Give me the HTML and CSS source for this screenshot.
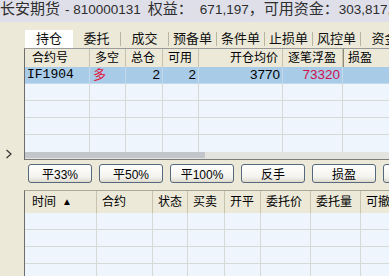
FILE: index.html
```html
<!DOCTYPE html>
<html lang="zh-CN">
<head>
  <meta charset="UTF-8">
  <meta name="viewport" content="width=device-width, initial-scale=1.0">
  <title>长安期货 - 持仓</title>
  <link rel="stylesheet" href="styles.css">
</head>
<body>
  <div class="titlebar">
    <span>长安期货</span><span class="digits dash">- 810000131</span><span class="label">权益：</span><span class="digits value">671,197</span>，<span>可用资金：</span><span class="digits">303,817,</span>
  </div>

  <div class="main">
    <div class="side">
      <svg class="expander" width="8" height="10" viewBox="0 0 8 10">
        <polyline points="1.5,1 6,5 1.5,9" fill="none" stroke="#333" stroke-width="1.2"/>
      </svg>
    </div>

    <div class="content">
      <div class="tabs">
        <div class="tab active">持仓</div>
        <div class="tab">委托</div>
        <div class="tab">成交</div>
        <div class="tab">预备单</div>
        <div class="tab">条件单</div>
        <div class="tab">止损单</div>
        <div class="tab">风控单</div>
        <div class="tab">资金</div>
      </div>

      <!-- positions grid -->
      <div class="panel positions">
        <div class="row head">
          <div class="cell first">合约号</div>
          <div class="cell">多空</div>
          <div class="cell">总仓</div>
          <div class="cell">可用</div>
          <div class="cell right">开仓均价</div>
          <div class="cell">逐笔浮盈</div>
          <div class="cell strong-sep">损盈</div>
        </div>
        <div class="row selected">
          <div class="cell code">IF1904</div>
          <div class="cell long">多</div>
          <div class="cell num">2</div>
          <div class="cell num">2</div>
          <div class="cell num">3770</div>
          <div class="cell num profit">73320</div>
          <div class="cell"></div>
        </div>
        <div class="row"><div class="cell"></div><div class="cell"></div><div class="cell"></div><div class="cell"></div><div class="cell"></div><div class="cell"></div><div class="cell"></div></div>
        <div class="row"><div class="cell"></div><div class="cell"></div><div class="cell"></div><div class="cell"></div><div class="cell"></div><div class="cell"></div><div class="cell"></div></div>
        <div class="row"><div class="cell"></div><div class="cell"></div><div class="cell"></div><div class="cell"></div><div class="cell"></div><div class="cell"></div><div class="cell"></div></div>
        <div class="row last"><div class="cell"></div><div class="cell"></div><div class="cell"></div><div class="cell"></div><div class="cell"></div><div class="cell"></div><div class="cell"></div></div>
        <div class="hscroll"><div class="thumb"></div></div>
      </div>

      <div class="actions">
        <button class="btn">平33%</button>
        <button class="btn">平50%</button>
        <button class="btn">平100%</button>
        <button class="btn">反手</button>
        <button class="btn">损盈</button>
        <button class="btn"></button>
      </div>

      <!-- orders grid -->
      <div class="panel orders">
        <div class="row head">
          <div class="cell first">时间<span class="sort">▲</span></div>
          <div class="cell">合约</div>
          <div class="cell">状态</div>
          <div class="cell">买卖</div>
          <div class="cell">开平</div>
          <div class="cell">委托价</div>
          <div class="cell">委托量</div>
          <div class="cell">可撤</div>
        </div>
        <div class="row"><div class="cell"></div><div class="cell"></div><div class="cell"></div><div class="cell"></div><div class="cell"></div><div class="cell"></div><div class="cell"></div><div class="cell"></div></div>
        <div class="row"><div class="cell"></div><div class="cell"></div><div class="cell"></div><div class="cell"></div><div class="cell"></div><div class="cell"></div><div class="cell"></div><div class="cell"></div></div>
        <div class="row"><div class="cell"></div><div class="cell"></div><div class="cell"></div><div class="cell"></div><div class="cell"></div><div class="cell"></div><div class="cell"></div><div class="cell"></div></div>
        <div class="row"><div class="cell"></div><div class="cell"></div><div class="cell"></div><div class="cell"></div><div class="cell"></div><div class="cell"></div><div class="cell"></div><div class="cell"></div></div>
      </div>
    </div>
  </div>
</body>
</html>
```

FILE: styles.css
```css
body {
  margin: 0;
  width: 389px;
  height: 276px;
  overflow: hidden;
  background: #ece9d8;
  color: #000;
  font-family: "Liberation Sans", "Noto Sans CJK SC", sans-serif;
  font-size: 12px;
}

.titlebar {
  height: 22px;
  background: #dedfe9;
  color: #2e2e2e;
  font-size: 15px;
  line-height: 17px;
  white-space: nowrap;
  overflow: hidden;
}

.titlebar .digits {
  font-size: 13.5px;
}

.titlebar .dash {
  margin-left: 5px;
}

.titlebar .label {
  margin-left: 7px;
}

.titlebar .value {
  margin-left: 7px;
}

.main {
  display: flex;
  height: 254px;
}

.side {
  width: 24px;
  flex: none;
  padding-top: 127px;
  box-sizing: border-box;
}

.expander {
  display: block;
  margin-left: 5px;
}

.content {
  flex: 1;
  min-width: 0;
  padding-top: 8px;
  overflow: hidden;
}

/* tabs */
.tabs {
  display: flex;
  align-items: flex-start;
  height: 18px;
  padding-left: 1px;
  white-space: nowrap;
}

.tab {
  width: 48px;
  flex: none;
  box-sizing: border-box;
  height: 14px;
  margin-top: 2px;
  line-height: 14px;
  text-align: center;
  font-size: 13px;
  color: #111;
  border-right: 1px solid #b9b5a3;
}

.tab.active {
  height: 18px;
  margin-top: 0;
  line-height: 18px;
  background: #fff;
  border-right: none;
}

/* grids */
.panel {
  border-left: 1px solid #6e6e6e;
  border-top: 1px solid #9a9a9a;
  overflow: hidden;
  white-space: nowrap;
}

.row {
  display: grid;
  height: 17px;
  background: #eff5fd;
}

.positions .row {
  grid-template-columns: 65px 36px 37px 36px 84px 60px 80px;
}

.orders .row {
  grid-template-columns: 72px 56px 35px 37px 36px 50px 50px 60px;
}

.cell {
  box-sizing: border-box;
  border-right: 1px solid #d6dad4;
  border-bottom: 1px solid #d6dad4;
  padding: 0 5px;
  line-height: 16px;
  overflow: hidden;
}

.row.last .cell {
  border-bottom: none;
}

.row.head {
  height: 18px;
  background: #ece9d8;
}

.row.head .cell {
  line-height: 18px;
  border-bottom: none;
  border-right: 1px solid #c6c2ad;
  font-size: 12px;
}

.orders .row.head {
  height: 22px;
}

.orders .row.head .cell {
  line-height: 22px;
}

.row.head .first {
  padding-left: 7px;
}

.row.head .right {
  text-align: right;
  padding-right: 4px;
}

.row.head .strong-sep {
  box-shadow: inset 1px 0 #8d8a7a;
}

.sort {
  font-size: 10px;
  margin-left: 6px;
  vertical-align: 1px;
}

.row.selected {
  background: #a8cbe8;
}

.row.selected .cell {
  border-right-color: #c4d9ea;
  border-bottom-color: #c4d9ea;
}

.code {
  font-family: "Liberation Mono", monospace;
  font-size: 13px;
  padding-left: 2px;
}

.long {
  color: #e2163c;
  font-size: 13px;
  padding-left: 3px;
}

.num {
  text-align: right;
  padding-right: 2px;
  font-size: 13.5px;
}

.profit {
  color: #d0104c;
}

.hscroll {
  height: 7px;
  background: #e3e3e0;
  border-bottom: 1px solid #7c7c7c;
}

.thumb {
  width: 180px;
  height: 6px;
  background: #c2c5c9;
}

/* buttons */
.actions {
  display: flex;
  gap: 7px;
  padding: 4px 0 7px 4px;
  white-space: nowrap;
}

.btn {
  width: 64px;
  height: 19px;
  flex: none;
  padding: 0;
  border: 1px solid #56687c;
  border-radius: 3px;
  background: linear-gradient(#ffffff, #f4f3ee 70%, #dedbcd);
  font-family: "Liberation Sans", "Noto Sans CJK SC", sans-serif;
  font-size: 12px;
  color: #000;
}

.orders {
  border-top-color: #aca899;
}
```
